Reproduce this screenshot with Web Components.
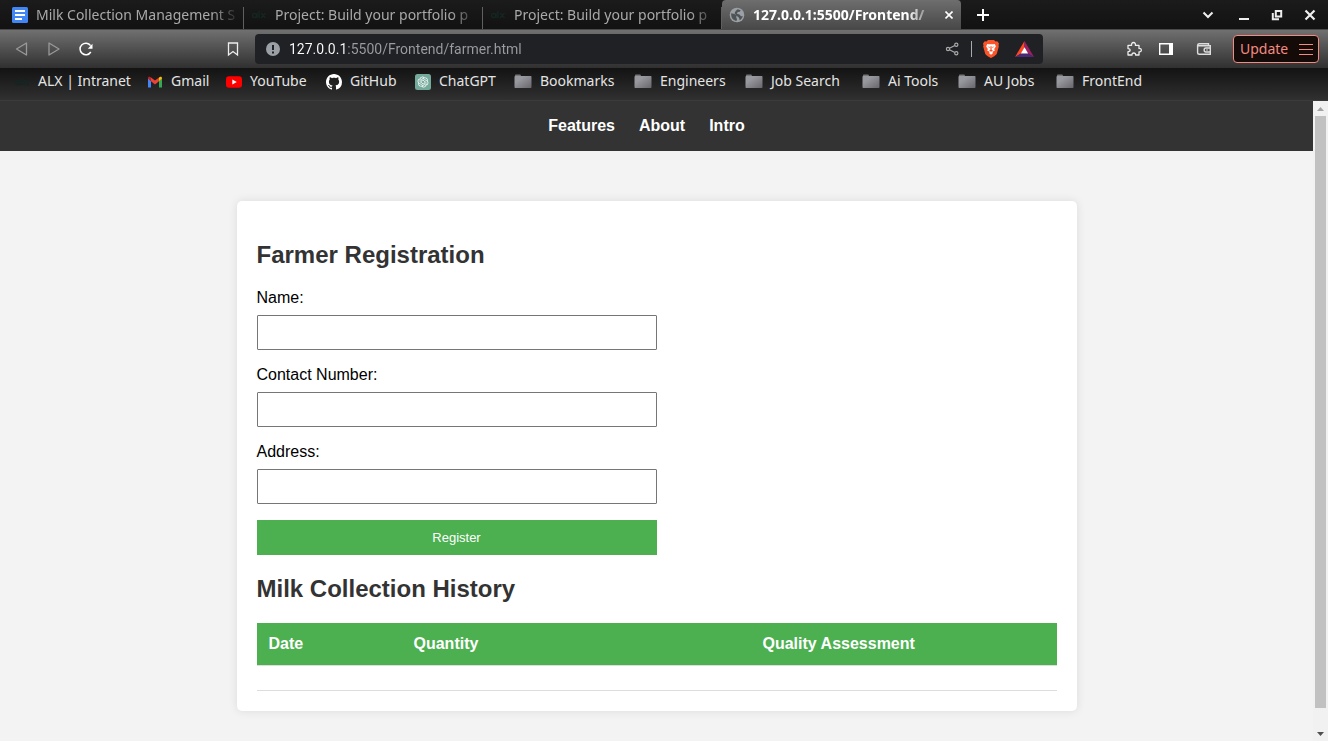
<!DOCTYPE html>
<html lang="en">
<head>
<meta charset="utf-8">
<meta name="viewport" content="width=device-width, initial-scale=1">
<title>Farmer Registration</title>
<style>
  html, body { height: 100%; margin: 0; }
  body { background: #121212; font-family: "Noto Sans", "Open Sans", sans-serif; font-size: 14px; }
</style>
</head>
<body>
<browser-window></browser-window>

<template id="browser-window">
  <style>
    :host { display: flex; flex-direction: column; height: 100%; min-height: 0; }
    .view { flex: 1; display: flex; min-height: 0; border-top: 1px solid #3b3b3b; }
    farmer-page { flex: 1; min-width: 0; overflow: hidden; }
  </style>
  <tab-strip></tab-strip>
  <browser-toolbar></browser-toolbar>
  <bookmarks-bar></bookmarks-bar>
  <div class="view">
    <farmer-page></farmer-page>
    <page-scrollbar></page-scrollbar>
  </div>
</template>

<template id="tab-strip">
  <style>
    :host { display: flex; align-items: stretch; height: 29px; padding: 0 2px 0 5px; background: linear-gradient(#1b1b1b, #121212); border-bottom: 1px solid #4a4a4a; box-sizing: content-box; }
    .spacer { flex: 1; }
    button { all: unset; display: grid; place-items: center; width: 33px; cursor: pointer; color: #fff; }
    .new { width: 24px; margin-left: 10px; border-radius: 4px; }
    .chev { margin-right: 3px; }
    svg { display: block; }
  </style>
  <browser-tab>
    <svg slot="icon" width="16" height="16" viewBox="0 0 16 16"><rect width="16" height="16" rx="1.5" fill="#4285f4"/><path d="M3 4h10M3 8h10M3 12h7" stroke="#fff" stroke-width="2"/></svg>
    Milk Collection Management S
  </browser-tab>
  <browser-tab><alx-icon slot="icon"></alx-icon>Project: Build your portfolio p</browser-tab>
  <browser-tab><alx-icon slot="icon"></alx-icon>Project: Build your portfolio p</browser-tab>
  <browser-tab active>
    <svg slot="icon" width="16" height="16" viewBox="0 0 16 16"><circle cx="8" cy="8" r="7.3" fill="#9aa0a6"/><path d="M2.2 6.2 5.5 7l2 1.6-.3 2 .8 1.5-.5 1.9C4.700 13.700 2.200 11 2.200 8zM8.500 2.300l3.200 1-1 1.500-2 .2-.8 1.700 2.600.8 1.500 1.700 1.700-.3c-.3 2-1.500 3.500-3 4.300l-.7-2.400-2.300-2L5.500 6.200l1-2z" fill="#505356"/></svg>
    127.0.0.1:5500/Frontend/
  </browser-tab>
  <button class="new" aria-label="New tab"><svg width="12" height="12" viewBox="0 0 12 12"><path d="M6 0v12M0 6h12" stroke="#fff" stroke-width="2"/></svg></button>
  <span class="spacer"></span>
  <button class="chev" aria-label="Search tabs"><svg width="12" height="12" viewBox="0 0 12 12"><path d="m1.500 3.500 4.500 4.500L10.500 3.500" fill="none" stroke="#eee" stroke-width="2"/></svg></button>
  <button aria-label="Minimize"><svg width="12" height="12" viewBox="0 0 12 12"><path d="M1 10h10" stroke="#eee" stroke-width="2"/></svg></button>
  <button aria-label="Restore"><svg width="12" height="12" viewBox="0 0 12 12"><path d="M4.800 2h5.400v5.400H4.800z" fill="none" stroke="#eee" stroke-width="2"/><path d="M1.800 4v6.200H8" fill="none" stroke="#eee" stroke-width="2"/></svg></button>
  <button aria-label="Close window"><svg width="12" height="12" viewBox="0 0 12 12"><path d="m1.500 1.500 9 9m0-9-9 9" stroke="#eee" stroke-width="2.200"/></svg></button>
</template>

<template id="browser-tab">
  <style>
    :host { display: flex; align-items: center; flex: 0 1 239px; min-width: 0; box-sizing: border-box; padding: 0 4px 0 7px; gap: 8px; color: #a9a9a9; background: linear-gradient(#606060, #606060) right bottom / 1px 22px no-repeat; }
    :host([active]) { color: #fff; font-weight: 700; background: linear-gradient(#6e6e6e, #484848); border-radius: 4px 4px 0 0; padding-right: 6px; }
    .title { flex: 1; min-width: 0; overflow: hidden; white-space: nowrap; -webkit-mask-image: linear-gradient(to left, transparent, #000 28px); mask-image: linear-gradient(to left, transparent, #000 28px); }
    button { all: unset; display: none; place-items: center; width: 12px; height: 16px; cursor: pointer; }
    :host([active]) button { display: grid; }
  </style>
  <slot name="icon"></slot>
  <span class="title"><slot></slot></span>
  <button aria-label="Close tab"><svg width="8" height="8" viewBox="0 0 8 8"><path d="m.5.5 7 7m0-7-7 7" stroke="#fff" stroke-width="1.600"/></svg></button>
</template>

<template id="alx-icon">
  <style>
    :host { display: block; width: 16px; height: 16px; }
    svg { display: block; }
  </style>
  <svg width="16" height="16" viewBox="0 0 16 16" fill="none" stroke="#142522" stroke-width="1.500"><circle cx="3.500" cy="8.500" r="2"/><path d="M6 6v5M8 4v7M10 6l4.500 5M14.500 6 10 11"/></svg>
</template>

<template id="browser-toolbar">
  <style>
    :host { display: flex; align-items: center; height: 38px; padding: 0 9px 0 14px; background: linear-gradient(#707070, #303030); }
    button { all: unset; display: grid; place-items: center; width: 16px; height: 28px; cursor: pointer; }
    svg { display: block; }
    .nav { display: flex; gap: 16px; flex: 0 0 211px; }
    .mark { margin-right: 14px; }
    address-bar { flex: 1; min-width: 0; }
    .tools { display: flex; gap: 16px; margin-left: 83px; }
    .tools .wallet { margin-left: 6px; }
    .update { box-sizing: border-box; display: flex; align-items: center; justify-content: space-between; width: 86px; padding: 0 5px 0 6px; margin-left: 21px; color: #f28b82; background: #140a08; border: 1px solid #f28b82; border-radius: 4px; line-height: 26px; }
  </style>
  <div class="nav">
    <button aria-label="Back"><svg width="16" height="16" viewBox="0 0 16 16"><path d="M12.500 2v12L2.500 8z" fill="none" stroke="#999" stroke-width="1.300" stroke-linejoin="round"/></svg></button>
    <button aria-label="Forward"><svg width="16" height="16" viewBox="0 0 16 16"><path d="M3 2v12l10-6z" fill="none" stroke="#999" stroke-width="1.300" stroke-linejoin="round"/></svg></button>
    <button aria-label="Reload"><svg width="16" height="16" viewBox="0 0 16 16"><path d="M12.800 11A5.800 5.800 0 1 1 12.600 4.600" fill="none" stroke="#fff" stroke-width="1.500"/><path d="M14.500 2.800v5H9.800z" fill="#fff"/></svg></button>
  </div>
  <button class="mark" aria-label="Bookmark this tab"><svg width="16" height="16" viewBox="0 0 16 16"><path d="M3.500 2h9v12L8 10.500 3.500 14z" fill="none" stroke="#eee" stroke-width="1.300"/></svg></button>
  <address-bar></address-bar>
  <div class="tools">
    <button aria-label="Extensions"><svg width="16" height="16" viewBox="0 0 16 16"><path d="M2 4.300h3.600c-.4-1.700.4-2.800 1.900-2.800s2.300 1.100 1.900 2.800H13v3.200c1.500-.2 2.300.5 2.300 1.700S14.500 11 13 10.800V14H9.600c.2-1.300-.6-2-1.800-2s-2 .7-1.800 2H2v-3.300c1.400 0 2.100-.6 2.100-1.600S3.400 7.600 2 7.600z" fill="none" stroke="#eee" stroke-width="1.300" stroke-linejoin="round"/></svg></button>
    <button aria-label="Sidebar"><svg width="16" height="16" viewBox="0 0 16 16"><path d="M1.700 2.700h12.600v10.600H1.700z" fill="none" stroke="#fff" stroke-width="1.400"/><path d="M11 2h4v12h-4z" fill="#fff"/></svg></button>
    <button class="wallet" aria-label="Wallet"><svg width="16" height="16" viewBox="0 0 16 16"><path d="M12.500 4.500V2.700H3.200C1.300 2.700 1.300 4.700 3 4.700h11.300v8.600H3.200c-1 0-1.600-.6-1.600-1.500V4M14.300 7h-4.500c-2.200 0-2.200 4 0 4h4.500" fill="none" stroke="#ddd" stroke-width="1.400"/><circle cx="11" cy="9" r=".8" fill="#ddd"/></svg></button>
  </div>
  <button class="update">Update <svg width="14" height="12" viewBox="0 0 14 12"><path d="M0 1.500h14M0 6.500h14M0 11.500h14" stroke="#f28b82" stroke-width="1"/></svg></button>
</template>

<template id="address-bar">
  <style>
    :host { display: flex; align-items: center; height: 30px; padding: 0 9px 0 10px; box-sizing: border-box; background: #202124; border-radius: 4px; }
    svg { display: block; }
    input { flex: 1; min-width: 0; margin: 0 16px 0 8px; padding: 0; border: 0; outline: 0; font: 14px Roboto, sans-serif; color: transparent; background: linear-gradient(to right, #fff 56px, #9a9da1 56px); -webkit-background-clip: text; background-clip: text; }
    button { all: unset; display: block; cursor: pointer; }
    .line { width: 1px; height: 16px; margin: 0 11px 0 12px; background: #aaa; }
    .bat { margin-left: 16px; }
  </style>
  <svg width="16" height="16" viewBox="0 0 16 16"><circle cx="8" cy="8" r="7" fill="#9aa0a6"/><path d="M8 4v5M8 10.500v2" stroke="#202124" stroke-width="2"/></svg>
  <input type="text" aria-label="Address" value="127.0.0.1:5500/Frontend/farmer.html" spellcheck="false">
  <button aria-label="Share"><svg width="14" height="14" viewBox="0 0 14 14" fill="none" stroke="#aaa" stroke-width="1.200"><circle cx="3" cy="7" r="1.600"/><circle cx="11.300" cy="2.800" r="1.600"/><circle cx="11.300" cy="11.200" r="1.600"/><path d="m4.500 6.200 5.300-2.700M4.500 7.800l5.300 2.700"/></svg></button>
  <span class="line"></span>
  <button aria-label="Brave Shields"><svg width="16" height="18" viewBox="0 0 16 18"><path d="M5 0h6l1.500 1.500L14.300 1.300 16 3.500l-.5 1.800.3 1.200-2 7.200C13.400 15 9.500 17.500 8 18c-1.500-.5-5.400-3-5.800-4.300l-2-7.200.3-1.200L0 3.500l1.700-2.200 1.800.2z" fill="#fb542b"/><g transform="translate(1.300 1.200) scale(.84)"><path d="m3.500 3.400 2 .3L8 3.500l2.500.2 2-.3 1.300 2.900-2 3 .7 2-2.500 1L10 14.500 8 16l-2-1.500.1-2.200-2.600-1 .7-2-2-3z" fill="#fff"/><path d="m4 6.300 2.600.6-.5 1.300zM12 6.300l-2.600.6.5 1.300zM7.300 6h1.400v4.200l1.600 1L8 12.700l-2.300-1.500 1.600-1z" fill="#fb542b"/></g></svg></button>
  <button class="bat" aria-label="Brave Rewards"><svg width="19" height="16" viewBox="0 0 19 16"><path d="M9.500 0 0 16l6-3.500 3.500-6z" fill="#ff4724"/><path d="M9.500 0 19 16l-6-3.500-3.500-6z" fill="#9e1f63"/><path d="m0 16 6-3.500h7l6 3.500z" fill="#4a2a78"/><path d="m9.500 6.200 3.700 6.300H5.800z" fill="#fff"/></svg></button>
</template>

<template id="bookmarks-bar">
  <style>
    :host { display: grid; grid-template-columns: 133px 79px 100px 89px 99px 120px 111px 117px 96px 98px auto; justify-content: start; height: 32px; padding-left: 14px; padding-bottom: 4px; box-sizing: border-box; background: linear-gradient(#131313, #303030); }
    svg { display: block; }
  </style>
  <bookmark-item><alx-icon slot="icon"></alx-icon>ALX | Intranet</bookmark-item>
  <bookmark-item><svg slot="icon" width="16" height="16" viewBox="0 0 16 16"><path d="M1 4v9.500h3V7z" fill="#4285f4"/><path d="M12 7v6.500h3V4z" fill="#34a853"/><path d="M1 4.500 4 7.300V3.500L2.800 2.800C2 2.300 1 3 1 4z" fill="#c5221f"/><path d="M12 3.500v3.800l3-2.800V4c0-1-1-1.700-1.800-1.200z" fill="#fbbc04"/><path d="M4 3.500v3.800l4 3.200 4-3.200V3.500L8 6.600z" fill="#ea4335"/></svg>Gmail</bookmark-item>
  <bookmark-item><svg slot="icon" width="16" height="16" viewBox="0 0 16 16"><rect y="2.300" width="16" height="11.500" rx="3" fill="#f00"/><path d="m6.300 5.500 4.500 2.500-4.500 2.500z" fill="#fff"/></svg>YouTube</bookmark-item>
  <bookmark-item><svg slot="icon" width="16" height="16" viewBox="0 0 16 16"><path fill="#fff" d="M8 0C3.580 0 0 3.580 0 8c0 3.540 2.290 6.530 5.470 7.590.4.070.55-.17.55-.38 0-.19-.01-.82-.01-1.490-2.010.37-2.530-.49-2.690-.94-.09-.23-.48-.94-.82-1.130-.28-.15-.68-.52-.01-.53.63-.01 1.080.58 1.230.82.72 1.210 1.870.87 2.330.66.07-.52.28-.87.51-1.070-1.780-.2-3.640-.89-3.640-3.950 0-.87.31-1.590.82-2.150-.08-.2-.36-1.020.08-2.120 0 0 .67-.21 2.200.82.64-.18 1.320-.27 2-.27s1.360.09 2 .27c1.530-1.040 2.200-.82 2.200-.82.44 1.100.16 1.920.08 2.120.51.56.82 1.270.82 2.150 0 3.070-1.870 3.750-3.650 3.950.29.25.54.73.54 1.480 0 1.070-.01 1.930-.01 2.200 0 .21.15.46.55.38A8.010 8.010 0 0 0 16 8c0-4.420-3.580-8-8-8z"/></svg>GitHub</bookmark-item>
  <bookmark-item><svg slot="icon" width="16" height="16" viewBox="0 0 16 16"><rect width="16" height="16" rx="2.500" fill="#74aa9c"/><g transform="translate(2.600 2.600) scale(.45)"><path fill="#fff" d="M22.282 9.821a5.985 5.985 0 0 0-.516-4.910 6.046 6.046 0 0 0-6.510-2.900A6.065 6.065 0 0 0 4.981 4.182a5.985 5.985 0 0 0-3.998 2.900 6.046 6.046 0 0 0 .743 7.097 5.980 5.980 0 0 0 .510 4.911 6.051 6.051 0 0 0 6.515 2.900A5.985 5.985 0 0 0 13.260 24a6.056 6.056 0 0 0 5.772-4.206 5.990 5.990 0 0 0 3.998-2.900 6.056 6.056 0 0 0-.748-7.073zM13.260 22.430a4.476 4.476 0 0 1-2.876-1.041l.141-.081 4.779-2.758a.795.795 0 0 0 .393-.681v-6.737l2.020 1.169a.071.071 0 0 1 .038.052v5.583a4.504 4.504 0 0 1-4.495 4.494zM3.600 18.304a4.471 4.471 0 0 1-.535-3.014l.142.085 4.783 2.759a.771.771 0 0 0 .781 0l5.843-3.369v2.333a.080.080 0 0 1-.033.062L9.740 19.950a4.500 4.500 0 0 1-6.140-1.646zM2.341 7.896a4.485 4.485 0 0 1 2.366-1.973V11.600a.766.766 0 0 0 .388.677l5.815 3.354-2.021 1.169a.076.076 0 0 1-.071 0l-4.830-2.787A4.504 4.504 0 0 1 2.341 7.872zm16.597 3.855-5.833-3.387L15.119 7.200a.076.076 0 0 1 .071 0l4.830 2.791a4.494 4.494 0 0 1-.677 8.105v-5.678a.790.790 0 0 0-.405-.667zm2.010-3.023-.141-.085-4.774-2.782a.776.776 0 0 0-.785 0L9.409 9.230V6.897a.066.066 0 0 1 .028-.062l4.830-2.787a4.499 4.499 0 0 1 6.681 4.660zM8.307 12.863l-2.020-1.164a.080.080 0 0 1-.038-.057V6.074a4.499 4.499 0 0 1 7.376-3.453l-.142.080-4.778 2.758a.795.795 0 0 0-.393.682zm1.097-2.365 2.602-1.500 2.607 1.500v2.999l-2.597 1.500-2.607-1.500z"/></g></svg>ChatGPT</bookmark-item>
  <bookmark-item><folder-icon slot="icon"></folder-icon>Bookmarks</bookmark-item>
  <bookmark-item><folder-icon slot="icon"></folder-icon>Engineers</bookmark-item>
  <bookmark-item><folder-icon slot="icon"></folder-icon>Job Search</bookmark-item>
  <bookmark-item><folder-icon slot="icon"></folder-icon>Ai Tools</bookmark-item>
  <bookmark-item><folder-icon slot="icon"></folder-icon>AU Jobs</bookmark-item>
  <bookmark-item><folder-icon slot="icon"></folder-icon>FrontEnd</bookmark-item>
</template>

<template id="bookmark-item">
  <style>
    :host { display: flex; align-items: center; }
    a { display: flex; align-items: center; gap: 8px; color: #e4e4e4; text-decoration: none; white-space: nowrap; }
    span { line-height: 18px; padding-bottom: 2px; }
  </style>
  <a href="#"><slot name="icon"></slot><span><slot></slot></span></a>
</template>

<template id="folder-icon">
  <style>
    :host { display: block; width: 18px; height: 16px; }
    svg { display: block; }
  </style>
  <svg width="18" height="16" viewBox="0 0 18 16"><defs><linearGradient id="g" x1="0" y1="0" x2="1" y2="1"><stop offset=".3" stop-color="#98989f"/><stop offset="1" stop-color="#66666b"/></linearGradient></defs><path d="M1 2.500V1.300C1 .9 1.300.5 1.800.5H6c.5 0 .7.400.8.800l.2 1.200z" fill="#777"/><path d="M.5 3c0-.6.4-1 1-1h15c.6 0 1 .4 1 1v10c0 .6-.4 1-1 1h-15c-.6 0-1-.4-1-1z" fill="url(#g)"/></svg>
</template>

<template id="page-scrollbar">
  <style>
    :host { display: flex; flex-direction: column; width: 15px; background: #f1f1f1; }
    button { all: unset; display: grid; place-items: center; height: 15px; }
    .track { flex: 1; padding: 0 2px; }
    .thumb { height: 97%; background: #c1c1c1; }
  </style>
  <button aria-label="Scroll up"><svg width="7" height="4" viewBox="0 0 7 4"><path d="M0 4 3.500 0 7 4z" fill="#a3a3a3"/></svg></button>
  <div class="track"><div class="thumb"></div></div>
  <button aria-label="Scroll down"><svg width="7" height="4" viewBox="0 0 7 4"><path d="M0 0l3.500 4L7 0z" fill="#505050"/></svg></button>
</template>

<template id="farmer-page">
  <style>
    :host { display: block; background: #f3f3f3; color: #000; font: 16px "Liberation Sans", Arial, sans-serif; }
    main { max-width: 800px; margin: 50px auto; padding: 20px; background: #fff; border-radius: 5px; box-shadow: 0 0 10px rgba(0, 0, 0, 0.1); }
    h2 { margin: 20px 0; font-size: 24px; line-height: 28px; color: #333; }
    form { display: grid; gap: 16px; max-width: 400px; }
    button { height: 35px; border: 0; padding: 0; background: #4caf50; color: #fff; font: 13px "Liberation Sans", Arial, sans-serif; cursor: pointer; }
  </style>
  <site-nav>
    <nav-link>Features</nav-link>
    <nav-link>About</nav-link>
    <nav-link>Intro</nav-link>
  </site-nav>
  <main>
    <h2>Farmer Registration</h2>
    <form>
      <form-field label="Name:"></form-field>
      <form-field label="Contact Number:" type="tel"></form-field>
      <form-field label="Address:"></form-field>
      <button type="button">Register</button>
    </form>
    <h2>Milk Collection History</h2>
    <collection-history></collection-history>
  </main>
</template>

<template id="site-nav">
  <style>
    :host { display: block; background: #333; }
    nav { display: flex; justify-content: center; gap: 24px; padding: 16px 20px 16px 0; line-height: 18px; }
  </style>
  <nav><slot></slot></nav>
</template>

<template id="nav-link">
  <style>
    :host { display: block; }
    a { color: #fff; font-weight: bold; text-decoration: none; }
  </style>
  <a href="#"><slot></slot></a>
</template>

<template id="form-field">
  <style>
    :host { display: grid; gap: 8px; }
    label { line-height: 18px; }
    input { box-sizing: border-box; width: 100%; height: 35px; margin: 0; padding: 8px; border: 1px solid #767676; border-radius: 1px; background: #fff; font: 13px "Liberation Sans", Arial, sans-serif; }
  </style>
  <label for="control"></label>
  <input id="control">
</template>

<template id="collection-history">
  <style>
    :host { display: block; }
    table { width: 100%; table-layout: fixed; border-collapse: separate; border-spacing: 0; }
    .date { width: 145px; }
    .quantity { width: 349px; }
    th, td { padding: 12px; text-align: left; line-height: 18px; border-bottom: 1px solid #ddd; }
    th { background: #4caf50 padding-box; color: #fff; }
  </style>
  <table>
    <colgroup><col class="date"><col class="quantity"><col></colgroup>
    <thead><tr><th>Date</th><th>Quantity</th><th>Quality Assessment</th></tr></thead>
    <tbody><tr><td></td><td></td><td></td></tr></tbody>
  </table>
</template>

<script>
  class TemplateElement extends HTMLElement {
    constructor() {
      super();
      const template = document.getElementById(this.localName);
      this.attachShadow({ mode: "open" }).append(template.content.cloneNode(true));
    }
  }

  class FormField extends TemplateElement {
    connectedCallback() {
      this.shadowRoot.querySelector("label").textContent = this.getAttribute("label");
      this.shadowRoot.querySelector("input").type = this.getAttribute("type") || "text";
    }
  }

  customElements.define("form-field", FormField);

  for (const name of [
    "alx-icon", "folder-icon", "browser-tab", "tab-strip", "address-bar", "browser-toolbar",
    "bookmark-item", "bookmarks-bar", "page-scrollbar", "nav-link", "site-nav",
    "collection-history", "farmer-page", "browser-window"
  ]) {
    customElements.define(name, class extends TemplateElement {});
  }
</script>
</body>
</html>
